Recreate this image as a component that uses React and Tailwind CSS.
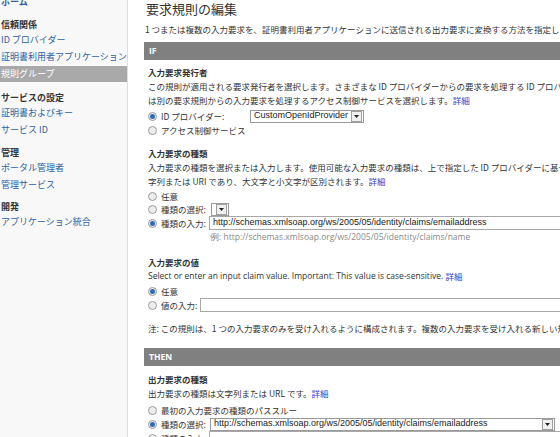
const linkCls = 'text-[#3341c8]';

function Radio({ checked }) {
  return (
    <span className="w-[9px] h-[9px] rounded-full border border-[#9c9c9c] bg-[#ededed] flex items-center justify-center shrink-0">
      {checked && <span className="w-[5px] h-[5px] rounded-full bg-[#2f6cb0]" />}
    </span>
  );
}

function Arrow() {
  return (
    <span className="w-[11px] h-[11px] border border-[#a0a0a0] bg-[#f0f0f0] flex items-center justify-center shrink-0">
      <svg width="5" height="3" viewBox="0 0 5 3">
        <polygon points="0,0 5,0 2.5,3" fill="#222" />
      </svg>
    </span>
  );
}

function RadioRow({ checked, children, h = 'h-[13px]' }) {
  return (
    <div className={`flex items-center ${h}`}>
      <Radio checked={checked} />
      <div className="ml-[4px] flex items-center">{children}</div>
    </div>
  );
}

function Bar({ label }) {
  return (
    <div className="h-[18px] bg-[#808080] flex items-center pl-[5px] text-white font-bold text-[8.5px] font-['Open_Sans',sans-serif]">
      {label}
    </div>
  );
}

function SideHead({ children, cls = '' }) {
  return <div className={`h-[14px] leading-[14px] font-bold text-[#333] ${cls}`}>{children}</div>;
}

function SideLink({ children, h = 'h-[16px]' }) {
  return <div className={`${h} flex items-center text-[#2f5fa2]`}>{children}</div>;
}

export default function App() {
  return (
    <div className="w-[560px] h-[437px] overflow-hidden flex bg-white text-[#333] font-['Noto_Sans_CJK_JP',sans-serif]">
      {/* sidebar */}
      <div className="w-[128px] shrink-0 bg-[#f8f8f8] border-r border-[#dddddd] text-[9px] pl-[1px]">
        <div className="-mt-[6px] h-[16px] flex items-center text-[#2f5fa2] font-bold">ホーム</div>

        <SideHead cls="mt-[8px]">信頼関係</SideHead>
        <SideLink>ID プロバイダー</SideLink>
        <SideLink h="h-[18px]">証明書利用者アプリケーション</SideLink>
        <div className="h-[16px] -ml-[1px] pl-[1px] flex items-center bg-[#a9a9a9] text-white">規則グループ</div>

        <SideHead cls="mt-[9px]">サービスの設定</SideHead>
        <SideLink>証明書およびキー</SideLink>
        <SideLink h="h-[17px]">サービス ID</SideLink>

        <SideHead cls="mt-[8px]">管理</SideHead>
        <SideLink>ポータル管理者</SideLink>
        <SideLink h="h-[17px]">管理サービス</SideLink>

        <SideHead cls="mt-[7px]">開発</SideHead>
        <SideLink>アプリケーション統合</SideLink>
      </div>

      {/* main */}
      <div className="w-[820px] shrink-0 pl-[16px] text-[8.5px] whitespace-nowrap">
        <div className="h-[18px] flex items-center text-[13px] text-[#333] pl-[2px]">要求規則の編集</div>
        <div className="mt-[4px] h-[14px] flex items-center pl-[1px]">
          1 つまたは複数の入力要求を、証明書利用者アプリケーションに送信される出力要求に変換する方法を指定します。
        </div>

        <div className="mt-[6px]">
          <Bar label="IF" />
        </div>

        <div className="pl-[4px]">
          {/* 入力要求発行者 */}
          <div className="mt-[5px] h-[14px] flex items-center font-bold">入力要求発行者</div>
          <div className="leading-[14px]">
            この規則が適用される要求発行者を選択します。さまざまな ID プロバイダーからの要求を処理する ID プロバイダーを選択するか、また
            <br />
            は別の要求規則からの入力要求を処理するアクセス制御サービスを選択します。<span className={linkCls}>詳細</span>
          </div>
          <div className="mt-[2px]">
            <RadioRow checked h="h-[14px]">
              <span className="w-[89px]">ID プロバイダー:</span>
              <span className="h-[13px] border border-[#9a9a9a] flex items-center gap-[3px] pl-[3px] pr-[1px] font-['Liberation_Sans',sans-serif] text-[9px] text-[#222]">
                CustomOpenIdProvider
                <Arrow />
              </span>
            </RadioRow>
            <RadioRow h="h-[14px]">アクセス制御サービス</RadioRow>
          </div>

          {/* 入力要求の種類 */}
          <div className="mt-[9px] h-[14px] flex items-center font-bold">入力要求の種類</div>
          <div className="leading-[14px]">
            入力要求の種類を選択または入力します。使用可能な入力要求の種類は、上で指定した ID プロバイダーに基づいています。要求の種類は文
            <br />
            字列または URI であり、大文字と小文字が区別されます。<span className={linkCls}>詳細</span>
          </div>
          <div className="mt-[2px]">
            <RadioRow>任意</RadioRow>
            <RadioRow>
              <span>種類の選択:</span>
              <span className="ml-[5px] h-[13px] w-[18px] border border-[#9a9a9a] flex items-center justify-end pr-[1px]">
                <Arrow />
              </span>
            </RadioRow>
            <RadioRow checked h="h-[14px]">
              <span>種類の入力:</span>
              <span className="ml-[3px] h-[14px] w-[600px] border border-[#a8a8a8] flex items-center pl-[3px] font-['Liberation_Sans',sans-serif] text-[9px] text-[#222]">
                http://schemas.xmlsoap.org/ws/2005/05/identity/claims/emailaddress
              </span>
            </RadioRow>
            <div className="h-[15px] flex items-center pl-[62px] text-[#8a8a8a] font-['Open_Sans',sans-serif] text-[8.5px]">
              例: http://schemas.xmlsoap.org/ws/2005/05/identity/claims/name
            </div>
          </div>

          {/* 入力要求の値 */}
          <div className="mt-[10px] h-[14px] flex items-center font-bold">入力要求の値</div>
          <div className="h-[14px] flex items-center font-['Open_Sans',sans-serif]">
            Select or enter an input claim value. Important: This value is case-sensitive.&nbsp;
            <span className={`${linkCls} font-['Noto_Sans_CJK_JP',sans-serif]`}>詳細</span>
          </div>
          <div className="mt-[2px]">
            <RadioRow checked>任意</RadioRow>
            <RadioRow h="h-[14px]">
              <span>値の入力:</span>
              <span className="ml-[3px] h-[14px] w-[600px] border border-[#a8a8a8]" />
            </RadioRow>
          </div>

          <div className="mt-[9px] h-[14px] flex items-center">
            注: この規則は、1 つの入力要求のみを受け入れるように構成されます。複数の入力要求を受け入れる新しい規則を作成するには、規則グループを使用します。
          </div>
        </div>

        <div className="mt-[13px]">
          <Bar label="THEN" />
        </div>

        <div className="pl-[4px]">
          <div className="mt-[6px] h-[14px] flex items-center font-bold">出力要求の種類</div>
          <div className="h-[14px] flex items-center">
            出力要求の種類は文字列または URL です。<span className={linkCls}>詳細</span>
          </div>
          <div className="mt-[4px]">
            <RadioRow>最初の入力要求の種類のパススルー</RadioRow>
            <RadioRow checked h="h-[14px]">
              <span>種類の選択:</span>
              <span className="ml-[4px] h-[13px] w-[345px] border border-[#9a9a9a] flex items-center justify-between pl-[3px] pr-[1px] font-['Liberation_Sans',sans-serif] text-[9px] text-[#222]">
                http://schemas.xmlsoap.org/ws/2005/05/identity/claims/emailaddress
                <Arrow />
              </span>
            </RadioRow>
            <RadioRow h="h-[14px]">
              <span>種類の入力:</span>
              <span className="ml-[3px] h-[14px] w-[600px] border border-[#a8a8a8]" />
            </RadioRow>
          </div>
        </div>
      </div>
    </div>
  );
}
